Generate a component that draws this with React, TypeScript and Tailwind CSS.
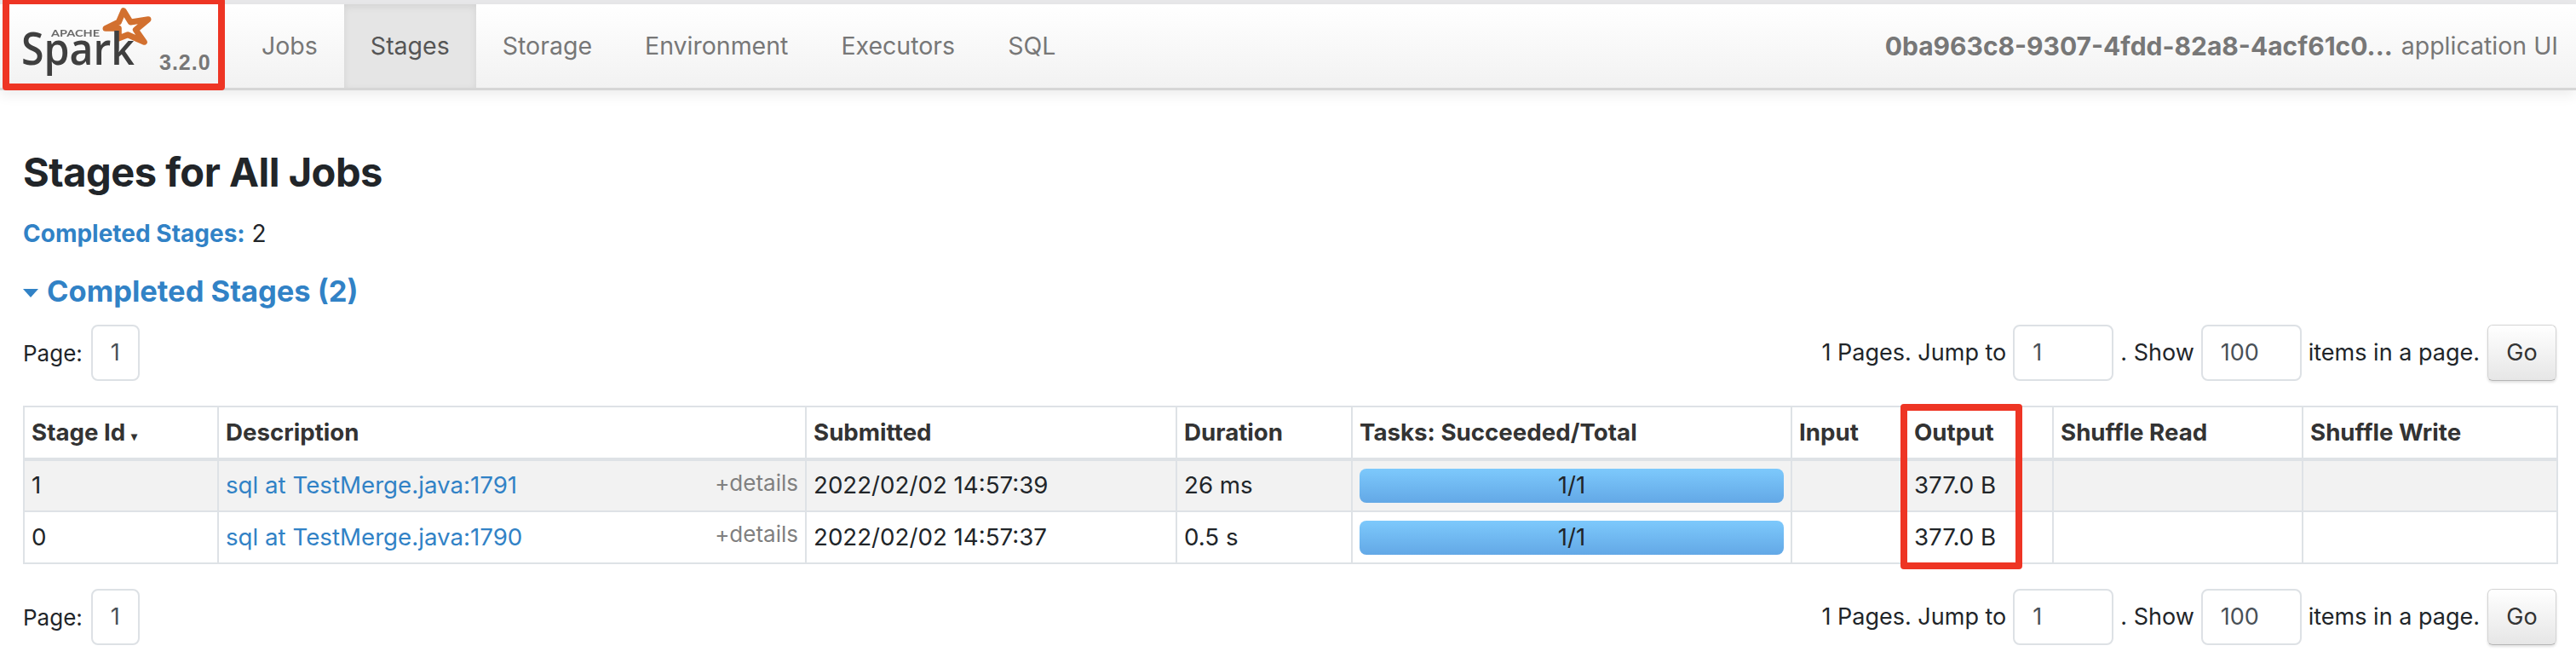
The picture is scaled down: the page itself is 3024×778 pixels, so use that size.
const font = "font-['Inter','Liberation_Sans',sans-serif]";

type Stage = { id: string; desc: string; submitted: string; duration: string };

const stages: Stage[] = [
  { id: '1', desc: 'sql at TestMerge.java:1791', submitted: '2022/02/02 14:57:39', duration: '26 ms' },
  { id: '0', desc: 'sql at TestMerge.java:1790', submitted: '2022/02/02 14:57:37', duration: '0.5 s' },
];

const headers = ['Description', 'Submitted', 'Duration', 'Tasks: Succeeded/Total', 'Input', 'Output', 'Shuffle Read', 'Shuffle Write'];

// viewBox uses page coordinates so the logo lines up with the screenshot
function SparkLogo() {
  return (
    <svg width="165" height="85" viewBox="20 5 165 85" className="ml-[20px] overflow-visible blur-[0.7px]">
      <path
        d="M145 12.7 L153.3 26 L174 22.7 L159.3 35 L169.3 49.3 L150 40.7 L139.3 45 L139.3 33.3 L124 33.3 L139.3 26 Z"
        fill="#fff"
        stroke="#d2702f"
        strokeWidth="7"
        strokeLinejoin="round"
      />
      <text x="60" y="43" textLength="57" lengthAdjust="spacingAndGlyphs" fontFamily="Lato, sans-serif" fontWeight="700" fontSize="11" fill="#6a6a6a">APACHE</text>
      <text x="25" y="76" textLength="133" lengthAdjust="spacingAndGlyphs" fontFamily="'Open Sans', sans-serif" fontWeight="600" fontSize="52" fill="#3f3f3f">Spark</text>
    </svg>
  );
}

function PageInput({ value, wide }: { value: string; wide?: boolean }) {
  return (
    <div className={`flex h-[66px] items-center rounded-lg border-2 border-[#dde1e5] bg-white text-[#495057] ${wide ? 'w-[118px] pl-[21px]' : 'w-[57px] justify-center'}`}>
      {value}
    </div>
  );
}

function Pager() {
  return (
    <div className="flex h-[66px] items-center justify-between text-[27px] text-[#212529]">
      <div className="flex items-center gap-[10px]">
        <span className="text-[26px]">Page:</span>
        <PageInput value="1" />
      </div>
      <div className="flex items-center">
        <span>1 Pages. Jump to</span>
        <div className="ml-2"><PageInput value="1" wide /></div>
        <span className="ml-2">. Show</span>
        <div className="ml-2"><PageInput value="100" wide /></div>
        <span className="ml-2">items in a page.</span>
        <div className="ml-[9px] flex h-[66px] w-[81px] items-center justify-center rounded-md border border-[#d4d4d4] border-b-[#b5b5b5] bg-gradient-to-b from-white to-[#e6e6e6] text-[#333] shadow-[0_2px_3px_rgba(0,0,0,0.12)]">
          Go
        </div>
      </div>
    </div>
  );
}

export default function App() {
  return (
    <div className={`relative h-[778px] w-[3024px] overflow-hidden bg-white ${font}`}>
      <div className="h-[5px] bg-[#e8e8ea]" />
      <nav className="flex h-[101px] items-stretch border-b-[3px] border-[#d6d6d6] bg-gradient-to-b from-white to-[#f2f2f2] shadow-[0_6px_14px_rgba(0,0,0,0.07)]">
        <div className="relative w-[276px] shrink-0">
          <SparkLogo />
          <span className="absolute left-[187px] top-[54px] font-['Liberation_Sans',sans-serif] text-[25px] font-bold leading-[28px] tracking-[1px] text-[#777]">3.2.0</span>
        </div>
        <ul className="flex items-stretch text-[28.5px] text-[#777]">
          {['Jobs', 'Stages', 'Storage', 'Environment', 'Executors', 'SQL'].map((tab) => (
            <li
              key={tab}
              className={`flex items-center px-[31px] ${tab === 'Stages' ? 'bg-[#e5e5e5] text-[#555] shadow-[inset_0_3px_9px_rgba(0,0,0,0.08)]' : ''}`}
            >
              {tab}
            </li>
          ))}
        </ul>
        <div className="ml-auto flex items-center gap-[10px] pr-[21px] text-[#777]">
          <strong className="text-[30px] font-bold">0ba963c8-9307-4fdd-82a8-4acf61c0...</strong>
          <span className="text-[28.5px]">application UI</span>
        </div>
      </nav>

      <main className="px-[27px] pr-[23px] text-[#212529]">
        <h3 className="mt-[68px] text-[47px] font-bold leading-[56px] tracking-[-0.5px]">Stages for All Jobs</h3>
        <p className="mt-[24px] text-[28px] leading-[40px]">
          <strong className="font-bold text-[#3182c6]">Completed Stages:</strong> 2
        </p>
        <h4 className="mt-[26px] flex items-center text-[34.5px] font-bold leading-[44px] text-[#3182c6]">
          <span className="mr-[10px] mt-[4px] h-0 w-0 border-x-[9px] border-t-[10px] border-x-transparent border-t-[#3182c6]" />
          Completed Stages (2)
        </h4>
        <div className="mt-[17px]"><Pager /></div>

        <table className="mt-[29px] w-[2974px] table-fixed border-collapse border-2 border-[#dee2e6] text-[27.7px]">
          <colgroup>
            {[228, 690, 435, 206, 516, 135, 172, 293, 299].map((w, i) => (
              <col key={i} style={{ width: w }} />
            ))}
          </colgroup>
          <thead>
            <tr className="h-[62px] border-b-4 border-[#dee2e6]">
              <th className="border-x-2 border-[#dee2e6] px-2 text-left font-bold text-[#333]">
                Stage Id <span className="text-[14px]">▾</span>
              </th>
              {headers.map((h) => (
                <th key={h} className="border-x-2 border-[#dee2e6] px-2 text-left font-bold text-[#333]">{h}</th>
              ))}
            </tr>
          </thead>
          <tbody>
            {stages.map((s, i) => (
              <tr key={s.id} className={`h-[61px] border-b-2 border-[#dee2e6] ${i === 0 ? 'bg-[#f2f2f2]' : 'bg-white'}`}>
                <td className="border-x-2 border-[#dee2e6] px-2">{s.id}</td>
                <td className="border-x-2 border-[#dee2e6] px-2">
                  <div className="flex items-center justify-between">
                    <span className="text-[#3182c6]">{s.desc}</span>
                    <span className="mb-[8px] text-[26px] text-[#808080]">+details</span>
                  </div>
                </td>
                <td className="border-x-2 border-[#dee2e6] px-2">{s.submitted}</td>
                <td className="border-x-2 border-[#dee2e6] px-2">{s.duration}</td>
                <td className="border-x-2 border-[#dee2e6] px-2">
                  <div className="flex h-[40px] items-center justify-center rounded-lg bg-gradient-to-b from-[#7dc9fc] to-[#63a8e6]">1/1</div>
                </td>
                <td className="border-x-2 border-[#dee2e6]" />
                <td className="border-x-2 border-[#dee2e6] px-2">377.0 B</td>
                <td className="border-x-2 border-[#dee2e6]" />
                <td className="border-x-2 border-[#dee2e6]" />
              </tr>
            ))}
          </tbody>
        </table>
        <div className="mt-[29px]"><Pager /></div>
      </main>

      {/* red annotation boxes */}
      <div className="absolute left-[3px] top-[-3px] h-[109px] w-[261px] rounded-[4px] border-[8px] border-[#ee3524]" />
      <div className="absolute left-[2231px] top-[474px] h-[194px] w-[143px] rounded-[4px] border-[8px] border-[#ee3524]" />
    </div>
  );
}
